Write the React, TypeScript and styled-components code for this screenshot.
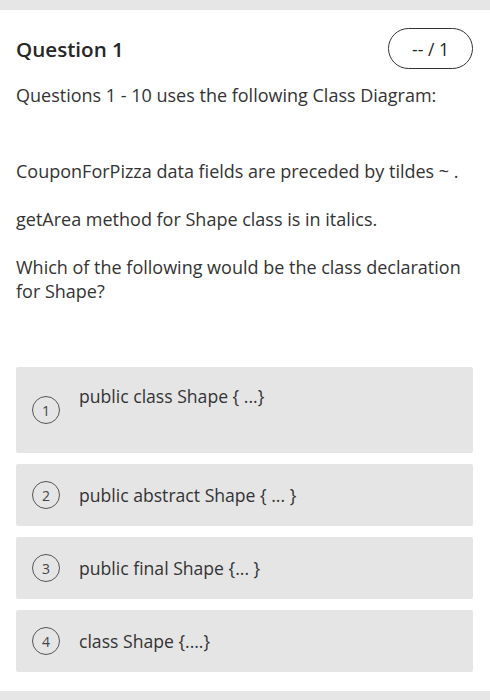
import React, { FC } from "react";
import styled, { createGlobalStyle } from "styled-components";

const GlobalStyle = createGlobalStyle`
  html, body {
    margin: 0;
    padding: 0;
    background: #ffffff;
  }
  body {
    font-family: "Open Sans", "Liberation Sans", sans-serif;
    color: #333333;
  }
`;

const options = [
  { num: 1, text: "public class Shape { ...}", tall: true },
  { num: 2, text: "public abstract Shape { ... }", tall: false },
  { num: 3, text: "public final Shape {... }", tall: false },
  { num: 4, text: "class Shape {....}", tall: false },
];

const App: FC = () => {
  return (
    <>
      <GlobalStyle />
      <Page>
        <Band />
        <Card>
          <Header>
            <Title>Question 1</Title>
            <Score>-- / 1</Score>
          </Header>
          <Intro>Questions 1 - 10 uses the following Class Diagram:</Intro>
          <Body>
            <Para>CouponForPizza data fields are preceded by tildes ~ .</Para>
            <Para>getArea method for Shape class is in italics.</Para>
            <Para>Which of the following would be the class declaration for Shape?</Para>
          </Body>
          <Options>
            {options.map((o) => (
              <Option key={o.num}>
                <Bullet>{o.num}</Bullet>
                <OptionText tall={o.tall}>{o.text}</OptionText>
              </Option>
            ))}
          </Options>
        </Card>
        <Band />
      </Page>
    </>
  );
};

const Page = styled("div")`
  display: flex;
  flex-direction: column;
  width: 490px;
  min-height: 700px;
`;
const Band = styled("div")`
  height: 10px;
  background-color: #e6e6e6;
  flex: 0 0 auto;
  &:last-child {
    height: 9px;
  }
`;
const Card = styled("div")`
  display: flex;
  flex-direction: column;
  height: 681px;
  box-sizing: border-box;
  padding: 18px 17px 0 16px;
  background: #ffffff;
`;
const Header = styled("div")`
  display: flex;
  justify-content: space-between;
  align-items: center;
`;
const Title = styled("h2")`
  margin: 0;
  font-size: 20.6px;
  font-weight: 600;
  color: #262626;
`;
const Score = styled("div")`
  width: 85px;
  height: 41px;
  box-sizing: border-box;
  border: 1.5px solid #333333;
  border-radius: 21px;
  display: flex;
  align-items: center;
  justify-content: center;
  font-size: 17.5px;
  color: #262626;
`;
const Intro = styled("p")`
  margin: 14px 0 0 0;
  font-size: 18px;
  line-height: 24px;
`;
const Body = styled("div")`
  display: flex;
  flex-direction: column;
  gap: 24px;
  margin-top: 52px;
`;
const Para = styled("p")`
  margin: 0;
  font-size: 18px;
  line-height: 24px;
`;
const Options = styled("div")`
  display: flex;
  flex-direction: column;
  gap: 11px;
  margin-top: 64px;
`;
const Option = styled("div")`
  display: flex;
  align-items: center;
  gap: 19px;
  padding: 17px 16px;
  background-color: #e5e5e5;
  border-radius: 2px;
`;
const Bullet = styled("span")`
  flex: 0 0 auto;
  width: 28px;
  height: 28px;
  box-sizing: border-box;
  border: 1.5px solid #555555;
  border-radius: 50%;
  display: flex;
  align-items: center;
  justify-content: center;
  font-size: 14px;
  color: #444444;
`;
const OptionText = styled("span")<{ tall: boolean }>`
  font-size: 17.6px;
  line-height: 24px;
  color: #333333;
  min-height: ${(p) => (p.tall ? "52px" : "24px")};
`;

export default App;
